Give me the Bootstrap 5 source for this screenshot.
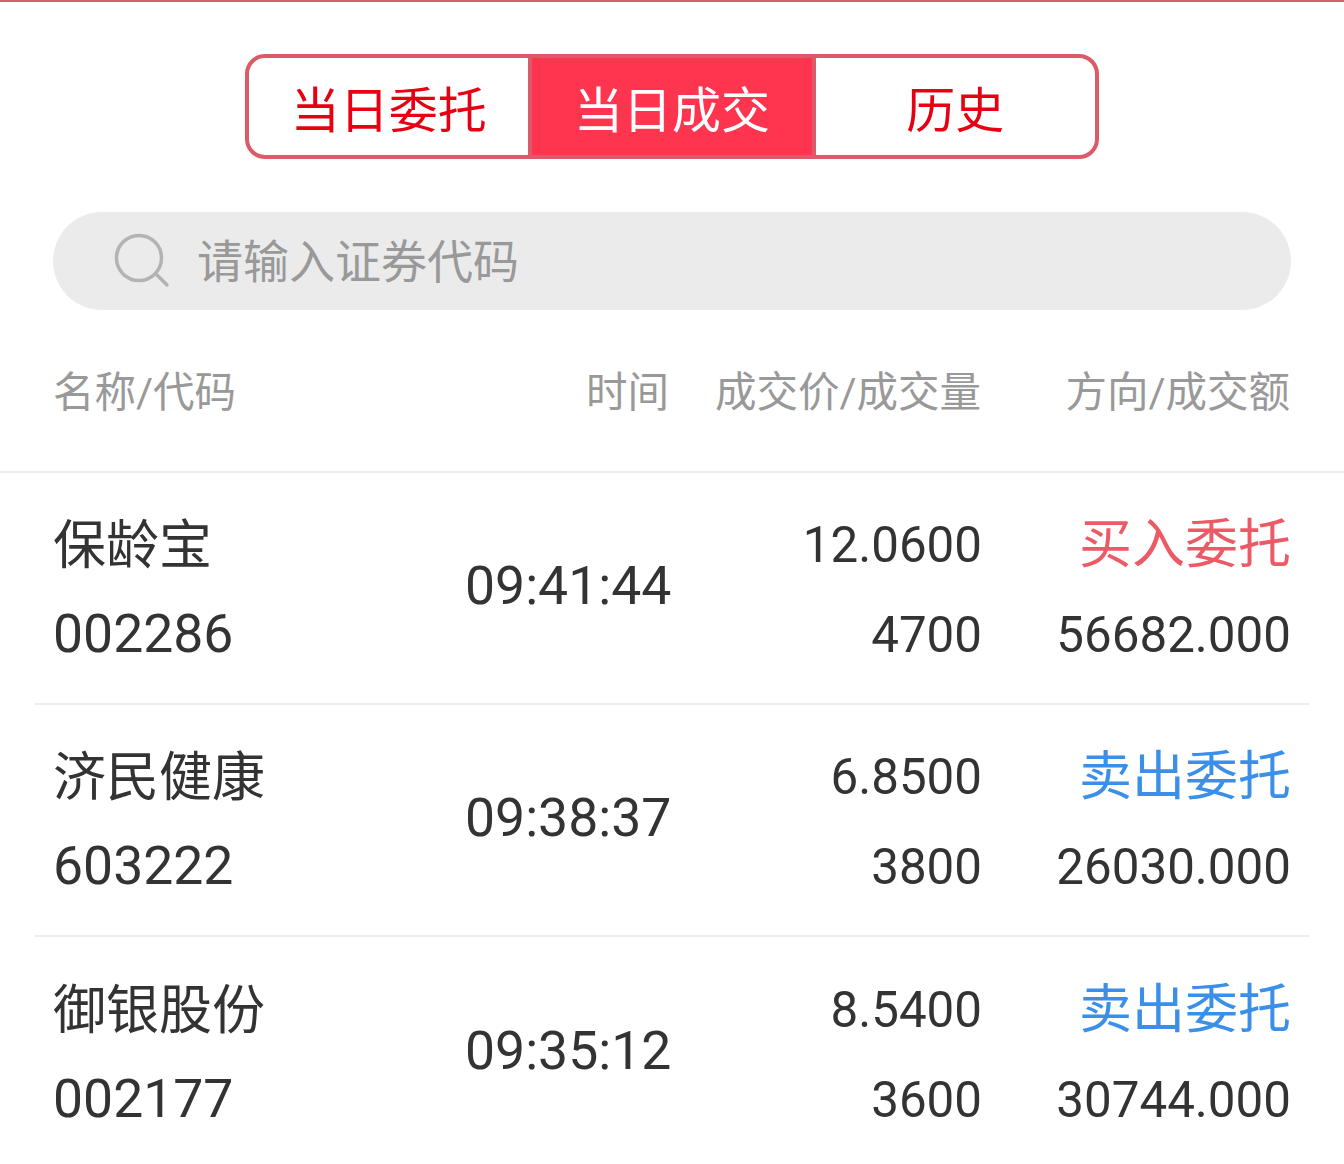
<!DOCTYPE html>
<html lang="zh-CN">
<head>
  <meta charset="UTF-8">
  <title>当日成交</title>
  <link href="https://cdn.jsdelivr.net/npm/bootstrap@5.3.0/dist/css/bootstrap.min.css" rel="stylesheet">
  <style>
    body { font-family: Roboto, "Noto Sans CJK SC", sans-serif; color: #333; background: #fff; }
    .top-line { height: 2px; background: #d9606b; }
    .tab-wrap { padding-top: 52px; }
    .tab-box { width: 854px; height: 105px; }
    .tab-box .btn { flex: 1 1 0; font-size: 49px; line-height: 1; color: #e60012; background: #fff; border: 4px solid #dc5b68; padding: 10px 0 0; }
    .tab-box.btn-group > .btn:not(:first-child):not(.tab-none) { margin-left: -4px; }
    .tab-box .btn:first-child { border-radius: 20px 0 0 20px; }
    .tab-box .btn:last-child { border-radius: 0 20px 20px 0; }
    .tab-box .btn.active { color: #fff; background: #ff344f; border-color: #dc5b68; }
    .search-box { height: 98px; margin: 53px 53px 0; padding-left: 61px; gap: 27px; background: #ebebeb; border-radius: 49px; }
    .search-box input { font-size: 46px; color: #999; background: transparent; border: 0; outline: 0; padding: 2px 0 0; }
    .search-box input::placeholder { color: #999; opacity: 1; }
    .trade-grid { display: grid; align-items: center; white-space: nowrap; }
    .head-row { grid-template-columns: 413px 208px 307px 309px; height: 163px; padding: 6px 54px 0 53px; font-size: 41.5px; color: #999; border-bottom: 2px solid #ececec; }
    .head-time { padding-right: 5px; }
    .trade-row { grid-template-columns: 412px 208px 309px 309px; height: 232px; margin: 0 35px; padding: 0 18px; font-size: 53px; line-height: 90px; border-bottom: 2px solid #ececec; }
    .trade-row:last-child { border-bottom: 0; }
    .name-cell { padding-top: 1px; }
    .code-text { font-size: 53.5px; line-height: 86px; }
    .time-cell { padding-bottom: 4px; font-size: 53.5px; }
    .num-cell { padding-top: 3px; font-size: 49.3px; }
    .dir-text { font-size: 53px; }
    .buy-text { color: #ec5a66; }
    .sell-text { color: #3a8fe8; }
  </style>
</head>
<body>
  <div class="top-line"></div>

  <!-- 切换 -->
  <div class="tab-wrap d-flex justify-content-center">
    <div class="tab-box btn-group">
      <button type="button" class="btn">当日委托</button>
      <button type="button" class="btn active">当日成交</button>
      <button type="button" class="btn">历史</button>
    </div>
  </div>

  <!-- 搜索 -->
  <div class="search-box d-flex align-items-center">
    <svg width="56" height="56" viewBox="0 0 56 56" fill="none" stroke="#b3b3b3" stroke-width="3.5" stroke-linecap="round">
      <circle cx="25" cy="25" r="22.5"/>
      <path d="M43 42 L53 52"/>
    </svg>
    <input class="flex-grow-1" type="text" placeholder="请输入证券代码">
  </div>

  <!-- 表头 -->
  <div class="head-row trade-grid">
    <div>名称/代码</div>
    <div class="head-time text-end">时间</div>
    <div class="text-end">成交价/成交量</div>
    <div class="text-end">方向/成交额</div>
  </div>

  <!-- 列表 -->
  <div>
    <div class="trade-row trade-grid">
      <div class="name-cell"><div>保龄宝</div><div class="code-text">002286</div></div>
      <div class="time-cell">09:41:44</div>
      <div class="num-cell text-end"><div>12.0600</div><div>4700</div></div>
      <div class="num-cell text-end"><div class="dir-text buy-text">买入委托</div><div>56682.000</div></div>
    </div>
    <div class="trade-row trade-grid">
      <div class="name-cell"><div>济民健康</div><div class="code-text">603222</div></div>
      <div class="time-cell">09:38:37</div>
      <div class="num-cell text-end"><div>6.8500</div><div>3800</div></div>
      <div class="num-cell text-end"><div class="dir-text sell-text">卖出委托</div><div>26030.000</div></div>
    </div>
    <div class="trade-row trade-grid">
      <div class="name-cell"><div>御银股份</div><div class="code-text">002177</div></div>
      <div class="time-cell">09:35:12</div>
      <div class="num-cell text-end"><div>8.5400</div><div>3600</div></div>
      <div class="num-cell text-end"><div class="dir-text sell-text">卖出委托</div><div>30744.000</div></div>
    </div>
  </div>
  <script src="https://cdn.jsdelivr.net/npm/bootstrap@5.3.0/dist/js/bootstrap.bundle.min.js"></script>
</body>
</html>
